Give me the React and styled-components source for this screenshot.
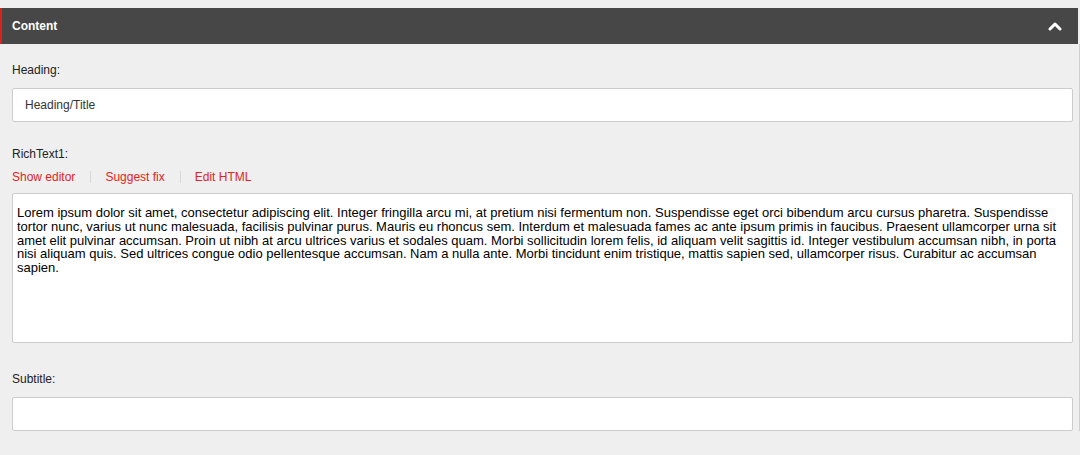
import React from "react";
import styled, { createGlobalStyle } from "styled-components";

const GlobalStyle = createGlobalStyle`
  html, body {
    margin: 0;
    padding: 0;
    background: #efefef;
  }
  body {
    font-family: "Liberation Sans", Arial, sans-serif;
    font-size: 12px;
    color: #222;
  }
`;

const Page = styled.div`
  width: 1080px;
  padding-top: 8px;
`;

const PanelHeader = styled.div`
  display: flex;
  align-items: center;
  justify-content: space-between;
  width: 1078px;
  height: 36px;
  box-sizing: border-box;
  background: #474747;
  border-left: 2px solid #d8231e;
  padding: 0 16px 0 10px;
  color: #fff;
  font-weight: 700;
  font-size: 12px;
`;

const PanelBody = styled.div`
  box-sizing: border-box;
  width: 1080px;
  padding: 19px 6px 0 12px;
  border-right: 1px solid #cfcfcf;
  margin-right: 1px;
`;

const Label = styled.div`
  line-height: 14px;
  color: #222;
  margin-top: ${(p) => p.$top || 0}px;
`;

const Input = styled.div`
  box-sizing: border-box;
  height: 34px;
  margin-top: 11px;
  background: #fff;
  border: 1px solid #ccc;
  border-radius: 2px;
  padding: 0 12px;
  display: flex;
  align-items: center;
  color: #333;
  font-size: 12px;
`;

const Links = styled.div`
  display: flex;
  align-items: center;
  margin-top: 10px;
  line-height: 14px;
`;

const Link = styled.a`
  color: #e2231e;
  text-decoration: none;
  padding: 0 15px 0 14px;
  border-left: 1px solid #d8d8d8;
  line-height: 12px;

  &:first-child {
    padding-left: 0;
    border-left: none;
  }
`;

const Editor = styled.div`
  box-sizing: border-box;
  height: 150px;
  margin-top: 10px;
  background: #fff;
  border: 1px solid #ccc;
  border-radius: 2px;
  padding: 12px 4px;
  color: #000;
  font-size: 13px;
  line-height: 13.75px;
`;

const lorem =
  "Lorem ipsum dolor sit amet, consectetur adipiscing elit. Integer fringilla arcu mi, at pretium nisi fermentum non. Suspendisse eget orci bibendum arcu cursus pharetra. Suspendisse tortor nunc, varius ut nunc malesuada, facilisis pulvinar purus. Mauris eu rhoncus sem. Interdum et malesuada fames ac ante ipsum primis in faucibus. Praesent ullamcorper urna sit amet elit pulvinar accumsan. Proin ut nibh at arcu ultrices varius et sodales quam. Morbi sollicitudin lorem felis, id aliquam velit sagittis id. Integer vestibulum accumsan nibh, in porta nisi aliquam quis. Sed ultrices congue odio pellentesque accumsan. Nam a nulla ante. Morbi tincidunt enim tristique, mattis sapien sed, ullamcorper risus. Curabitur ac accumsan sapien.";

function ChevronUp() {
  return (
    <svg width="14" height="10" viewBox="0 0 14 10">
      <polyline
        points="2,8 7,3 12,8"
        fill="none"
        stroke="#fff"
        strokeWidth="3"
        strokeLinecap="round"
        strokeLinejoin="round"
      />
    </svg>
  );
}

export default function App() {
  return (
    <Page>
      <GlobalStyle />
      <PanelHeader>
        <span>Content</span>
        <ChevronUp />
      </PanelHeader>
      <PanelBody>
        <Label>Heading:</Label>
        <Input>Heading/Title</Input>

        <Label $top={25}>RichText1:</Label>
        <Links>
          <Link>Show editor</Link>
          <Link>Suggest fix</Link>
          <Link>Edit HTML</Link>
        </Links>
        <Editor>{lorem}</Editor>

        <Label $top={29}>Subtitle:</Label>
        <Input />
      </PanelBody>
    </Page>
  );
}
